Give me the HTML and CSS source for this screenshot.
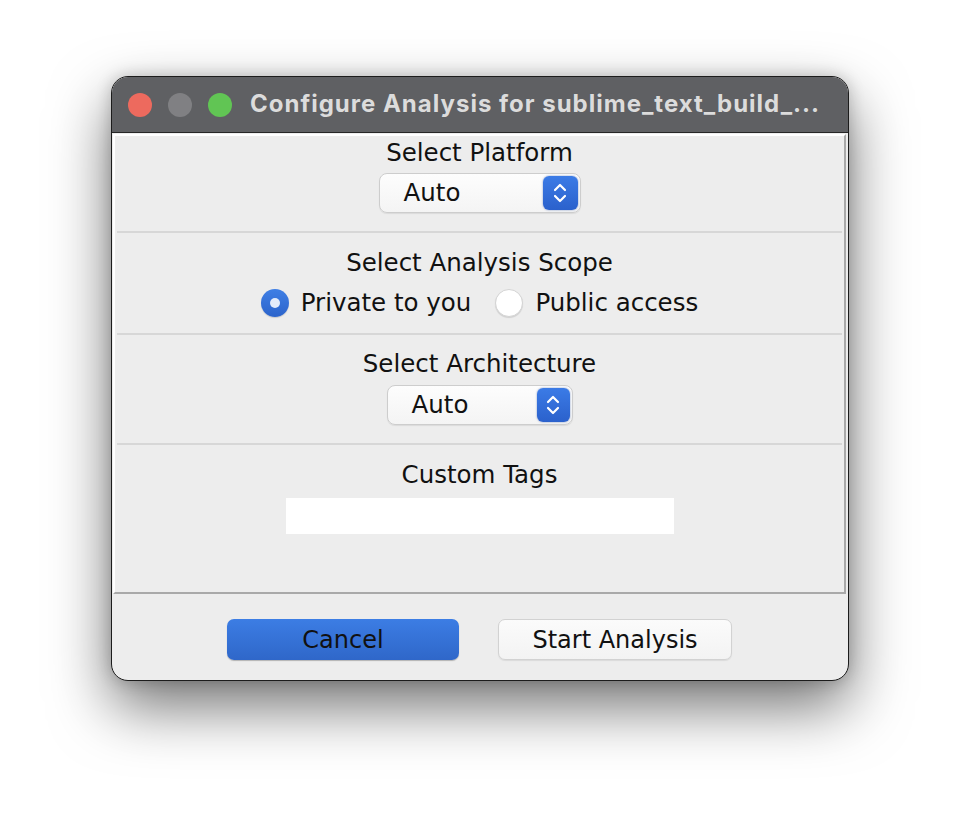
FILE: index.html
```html
<!DOCTYPE html>
<html>
<head>
<meta charset="utf-8">
<link rel="stylesheet" href="styles.css">
</head>
<body>
<div class="window">
  <div class="titlebar">
    <span class="light red"></span>
    <span class="light gray"></span>
    <span class="light green"></span>
    <span class="title">Configure Analysis for sublime_text_build_...</span>
  </div>
  <div class="content">
    <div class="panel">
      <div class="section s1">
        <div class="label">Select Platform</div>
        <div class="select w202">
          <span class="sel-text">Auto</span>
          <span class="stepper"><svg width="16" height="24" viewBox="0 0 16 24"><path d="M3 9 L8 4 L13 9 M3 15 L8 20 L13 15" fill="none" stroke="#fff" stroke-width="2.2" stroke-linecap="round" stroke-linejoin="round"/></svg></span>
        </div>
      </div>
      <div class="sep"></div>
      <div class="section s2">
        <div class="label">Select Analysis Scope</div>
        <div class="radios">
          <span class="radio on"></span><span class="rlabel">Private to you</span>
          <span class="radio off"></span><span class="rlabel">Public access</span>
        </div>
      </div>
      <div class="sep"></div>
      <div class="section s3">
        <div class="label">Select Architecture</div>
        <div class="select w186">
          <span class="sel-text">Auto</span>
          <span class="stepper"><svg width="16" height="24" viewBox="0 0 16 24"><path d="M3 9 L8 4 L13 9 M3 15 L8 20 L13 15" fill="none" stroke="#fff" stroke-width="2.2" stroke-linecap="round" stroke-linejoin="round"/></svg></span>
        </div>
      </div>
      <div class="sep"></div>
      <div class="section s4">
        <div class="label">Custom Tags</div>
        <div class="input"></div>
      </div>
    </div>
    <div class="footer">
      <div class="btn primary">Cancel</div>
      <div class="btn secondary">Start Analysis</div>
    </div>
  </div>
</div>
</body>
</html>
```
FILE: styles.css
```css
html, body {
  margin: 0;
  padding: 0;
  background: #ffffff;
}
body {
  min-height: 828px;
  box-sizing: border-box;
  padding-top: 76px;
  font-family: "DejaVu Sans", "Liberation Sans", sans-serif;
  color: #111;
}
.window {
  width: 736px;
  height: 603px;
  margin: 0 auto;
  border: 1px solid #1c1c1c;
  border-radius: 17px;
  overflow: hidden;
  background: #ededed;
  box-shadow: 0 26px 60px rgba(0,0,0,0.55), 0 0 16px rgba(0,0,0,0.2);
  display: flex;
  flex-direction: column;
}
.titlebar {
  height: 55px;
  flex: none;
  background: #5f6063;
  border-bottom: 1px solid #262626;
  display: flex;
  align-items: center;
  padding-left: 16px;
  box-sizing: content-box;
}
.light {
  width: 24px;
  height: 24px;
  border-radius: 50%;
  margin-right: 16px;
  flex: none;
}
.light.red { background: #ed6a5e; }
.light.gray { background: #808083; }
.light.green { background: #61c554; }
.title {
  margin-left: 2px;
  margin-top: -2px;
  font-family: "Inter", "Liberation Sans", sans-serif;
  font-weight: 700;
  font-size: 24px;
  color: #dcdcdc;
  white-space: nowrap;
  letter-spacing: 1px;
}
.content {
  flex: 1;
  display: flex;
  flex-direction: column;
  padding: 1px 2px 0 1px;
}
.panel {
  height: 456px;
  border-top: 2px solid #ffffff;
  border-left: 2px solid #ffffff;
  border-right: 2px solid #a9a9a9;
  border-bottom: 2px solid #a9a9a9;
  display: flex;
  flex-direction: column;
}
.sep {
  height: 2px;
  margin: 0 2px;
  background: #d7d7d7;
  flex: none;
}
.section {
  display: flex;
  flex-direction: column;
  align-items: center;
  flex: none;
}
.label {
  font-size: 24.5px;
  line-height: 28px;
  height: 28px;
  color: #111;
}
.s1 { height: 95px; padding-top: 3px; box-sizing: border-box; }
.s1 .select { margin-top: 6px; }
.s2 { height: 100px; padding-top: 16px; box-sizing: border-box; }
.s3 { height: 108px; padding-top: 15px; box-sizing: border-box; }
.s3 .select { margin-top: 7px; }
.s4 { flex: 1; padding-top: 16px; box-sizing: border-box; }

.select {
  height: 40px;
  box-sizing: border-box;
  border: 1px solid #cdcdcd;
  border-radius: 8px;
  background: linear-gradient(#fdfdfd, #f4f4f4);
  box-shadow: 0 1px 1px rgba(0,0,0,0.08);
  display: flex;
  align-items: center;
  justify-content: space-between;
  padding: 0 2px 0 24px;
}
.w202 { width: 202px; }
.w186 { width: 186px; }
.sel-text {
  font-size: 24.5px;
  line-height: 28px;
  color: #111;
}
.stepper {
  width: 35px;
  height: 34px;
  border-radius: 6px;
  background: linear-gradient(#3b7be6, #2b61cc);
  box-shadow: 0 0 2px rgba(30,70,160,0.6);
  display: flex;
  align-items: center;
  justify-content: center;
}
.w186 .stepper { width: 33px; }

.radios {
  margin-top: 12px;
  height: 28px;
  display: flex;
  align-items: center;
}
.radio {
  width: 28px;
  height: 28px;
  border-radius: 50%;
  box-sizing: border-box;
  flex: none;
  display: flex;
  align-items: center;
  justify-content: center;
}
.radio.on {
  background: linear-gradient(#3f7fe5, #2c64cb);
  box-shadow: 0 1px 1px rgba(0,0,0,0.15);
}
.radio.on::after {
  content: "";
  width: 10px;
  height: 10px;
  border-radius: 50%;
  background: #e4ecfa;
}
.radio.off {
  background: #ffffff;
  border: 1px solid #d4d4d4;
  box-shadow: 0 1px 1px rgba(0,0,0,0.12);
  margin-left: 24px;
}
.rlabel {
  margin-left: 12px;
  font-size: 24.5px;
  line-height: 28px;
  color: #111;
}
.input {
  margin-top: 9px;
  width: 388px;
  height: 36px;
  background: #ffffff;
}
.footer {
  display: flex;
  justify-content: center;
  gap: 39px;
  padding-top: 25px;
}
.btn {
  height: 41px;
  box-sizing: border-box;
  border-radius: 7px;
  display: flex;
  align-items: center;
  justify-content: center;
  font-size: 24px;
  color: #111;
}
.btn.primary {
  width: 232px;
  background: linear-gradient(#3c7de4, #2f67c9);
  box-shadow: 0 1px 1px rgba(0,0,0,0.25);
}
.btn.secondary {
  width: 234px;
  background: linear-gradient(#fbfbfb, #f3f3f3);
  border: 1px solid #d2d2d2;
  box-shadow: 0 1px 1px rgba(0,0,0,0.08);
}
```
